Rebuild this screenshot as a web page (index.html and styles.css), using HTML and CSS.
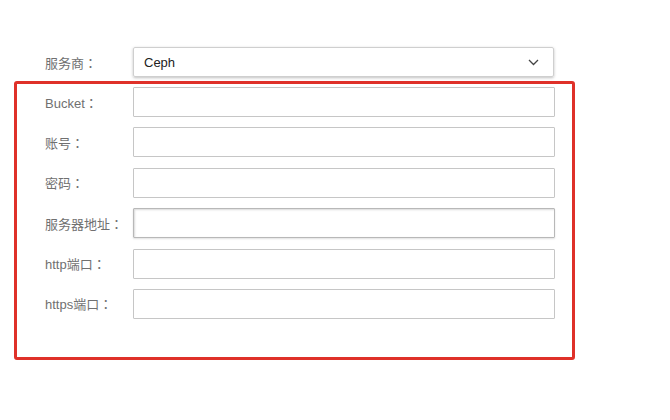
FILE: index.html
```html
<!DOCTYPE html>
<html>
<head>
<meta charset="utf-8">
<link rel="stylesheet" href="styles.css">
</head>
<body>
<div class="form">
  <div class="row top-row">
    <label class="lbl">服务商<span class="colon">：</span></label>
    <div class="select">
      <span class="val">Ceph</span>
      <svg class="chev" width="11" height="7" viewBox="0 0 11 7"><path d="M1 1 L5.5 5.5 L10 1" fill="none" stroke="#444" stroke-width="1.3"/></svg>
    </div>
  </div>
  <div class="group">
    <div class="row"><label class="lbl">Bucket<span class="colon">：</span></label><div class="input"></div></div>
    <div class="row"><label class="lbl">账号<span class="colon">：</span></label><div class="input"></div></div>
    <div class="row"><label class="lbl">密码<span class="colon">：</span></label><div class="input"></div></div>
    <div class="row"><label class="lbl">服务器地址<span class="colon">：</span></label><div class="input focus"></div></div>
    <div class="row"><label class="lbl">http端口<span class="colon">：</span></label><div class="input"></div></div>
    <div class="row"><label class="lbl">https端口<span class="colon">：</span></label><div class="input"></div></div>
  </div>
</div>
</body>
</html>
```
FILE: styles.css
```css
html, body {
  margin: 0;
  padding: 0;
  background: #fff;
}
body {
  font-family: "Liberation Sans", "Noto Sans CJK SC", sans-serif;
  font-size: 13px;
  color: #666;
}
.form {
  padding-top: 47px;
}
.row {
  display: flex;
  align-items: center;
}
.lbl {
  width: 88px;
  flex: none;
  color: #707070;
  font-size: 13px;
  white-space: nowrap;
}
.colon {
  font-family: "Noto Sans CJK JP", sans-serif;
}
.top-row {
  padding-left: 45px;
  height: 30px;
}
.select {
  box-sizing: border-box;
  width: 421px;
  height: 30px;
  border: 1px solid #cfcfcf;
  box-shadow: 0 1px 3px rgba(0,0,0,0.25);
  display: flex;
  align-items: center;
  justify-content: space-between;
  padding: 0 14px 0 10px;
  border-radius: 2px;
}
.val {
  color: #222;
  font-size: 13px;
}
.group {
  margin: 4px 0 0 14px;
  width: 561px;
  box-sizing: border-box;
  border: 3px solid #df3129;
  border-radius: 3px;
  padding: 3px 0 38px 28px;
  display: flex;
  flex-direction: column;
  gap: 10.4px;
}
.input {
  box-sizing: border-box;
  width: 422px;
  height: 30px;
  border: 1px solid #c6c6c6;
  border-radius: 1px;
}
.input.focus {
  border-color: #b8b8b8;
  box-shadow: inset 1px 1px 2px rgba(0,0,0,0.15), 0 1px 2px rgba(0,0,0,0.12);
}
```
